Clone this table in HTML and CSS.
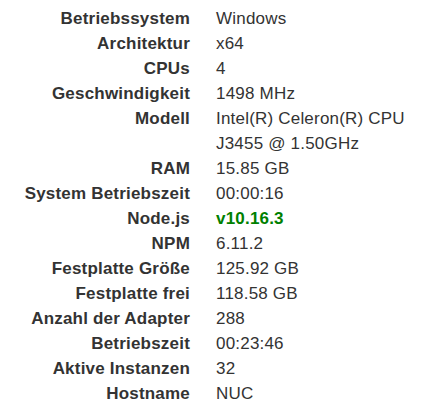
FILE: index.html
```html
<!DOCTYPE html>
<html lang="de">
<head>
<meta charset="utf-8">
<link rel="stylesheet" href="styles.css">
</head>
<body>
<div class="info">
  <div class="label">Betriebssystem</div><div class="value">Windows</div>
  <div class="label">Architektur</div><div class="value">x64</div>
  <div class="label">CPUs</div><div class="value">4</div>
  <div class="label">Geschwindigkeit</div><div class="value">1498 MHz</div>
  <div class="label">Modell</div><div class="value">Intel(R) Celeron(R) CPU J3455 @ 1.50GHz</div>
  <div class="label">RAM</div><div class="value">15.85 GB</div>
  <div class="label">System Betriebszeit</div><div class="value">00:00:16</div>
  <div class="label">Node.js</div><div class="value green">v10.16.3</div>
  <div class="label">NPM</div><div class="value">6.11.2</div>
  <div class="label">Festplatte Größe</div><div class="value">125.92 GB</div>
  <div class="label">Festplatte frei</div><div class="value">118.58 GB</div>
  <div class="label">Anzahl der Adapter</div><div class="value">288</div>
  <div class="label">Betriebszeit</div><div class="value">00:23:46</div>
  <div class="label">Aktive Instanzen</div><div class="value">32</div>
  <div class="label">Hostname</div><div class="value">NUC</div>
</div>
</body>
</html>
```

FILE: styles.css
```css
html, body {
  margin: 0;
  background: #fff;
}
body {
  font-family: "Liberation Sans", Arial, sans-serif;
  font-size: 17px;
  letter-spacing: 0.2px;
  color: #333;
}
.info {
  display: grid;
  grid-template-columns: 190px 200px;
  column-gap: 26px;
  line-height: 25px;
  padding-top: 6px;
}
.label {
  text-align: right;
  font-weight: bold;
}
.value {
  font-weight: normal;
}
.green {
  color: #008000;
  font-weight: bold;
}
```
